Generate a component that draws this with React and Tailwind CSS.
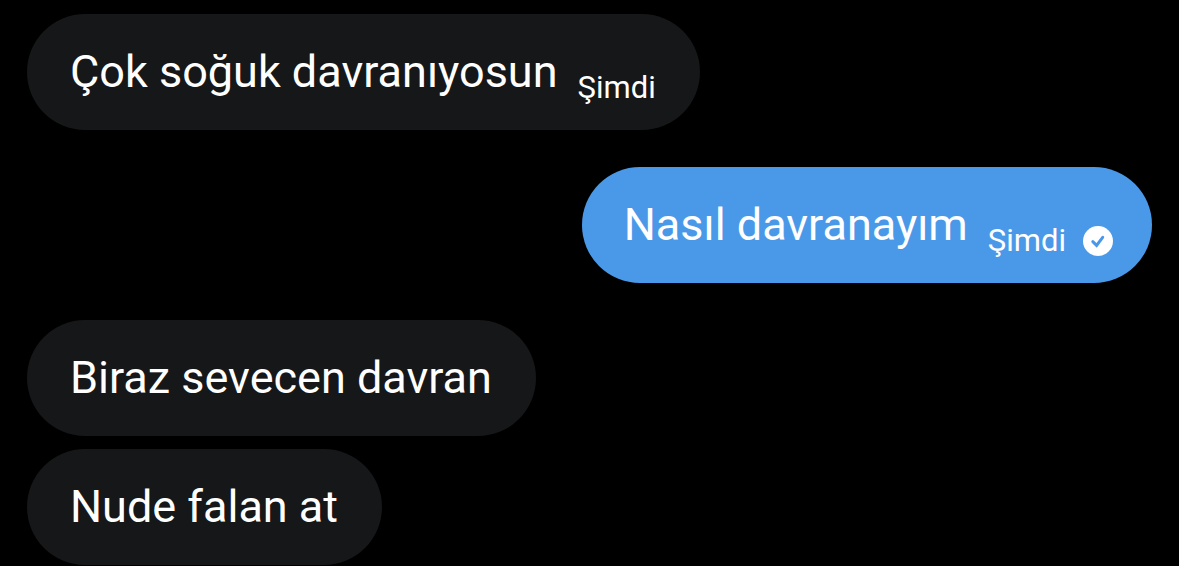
import React from 'react';

function SentIcon() {
  return (
    <svg viewBox="0 0 30 30" className="size-[30px] shrink-0" role="img" aria-label="Gönderildi">
      <circle cx="15" cy="15" r="15" fill="#fff" />
      <path
        d="M9.8 15.6l3.8 3.8 6.1-8.1"
        fill="none"
        stroke="#4a99e9"
        strokeWidth="3"
        strokeLinecap="round"
      />
    </svg>
  );
}

function Message({ text, time, own }) {
  return (
    <li
      className={
        own
          ? 'flex h-29 w-fit items-center self-end rounded-full bg-[#4a99e9] pr-[39px] pl-[42px]'
          : 'flex h-29 w-fit items-center self-start rounded-full bg-[#161718] pr-11 pl-[43px]'
      }
    >
      <p className="text-[45px] leading-[60px] whitespace-nowrap">{text}</p>
      {time && (
        <div className="ml-5 flex items-center gap-[17px] pt-[31px]">
          <time className="text-[31px] leading-10 whitespace-nowrap">{time}</time>
          {own && <SentIcon />}
        </div>
      )}
    </li>
  );
}

export default function App() {
  return (
    <main className="min-h-screen overflow-hidden bg-black px-[27px] pt-3.5 font-['Roboto','Liberation_Sans',sans-serif] font-normal text-white">
      <ul className="flex flex-col gap-[37px]">
        <Message text="Çok soğuk davranıyosun" time="Şimdi" />
        <Message text="Nasıl davranayım" time="Şimdi" own />
        <li>
          <ul className="flex flex-col gap-[13px]">
            <Message text="Biraz sevecen davran" />
            <Message text="Nude falan at" />
          </ul>
        </li>
      </ul>
    </main>
  );
}
